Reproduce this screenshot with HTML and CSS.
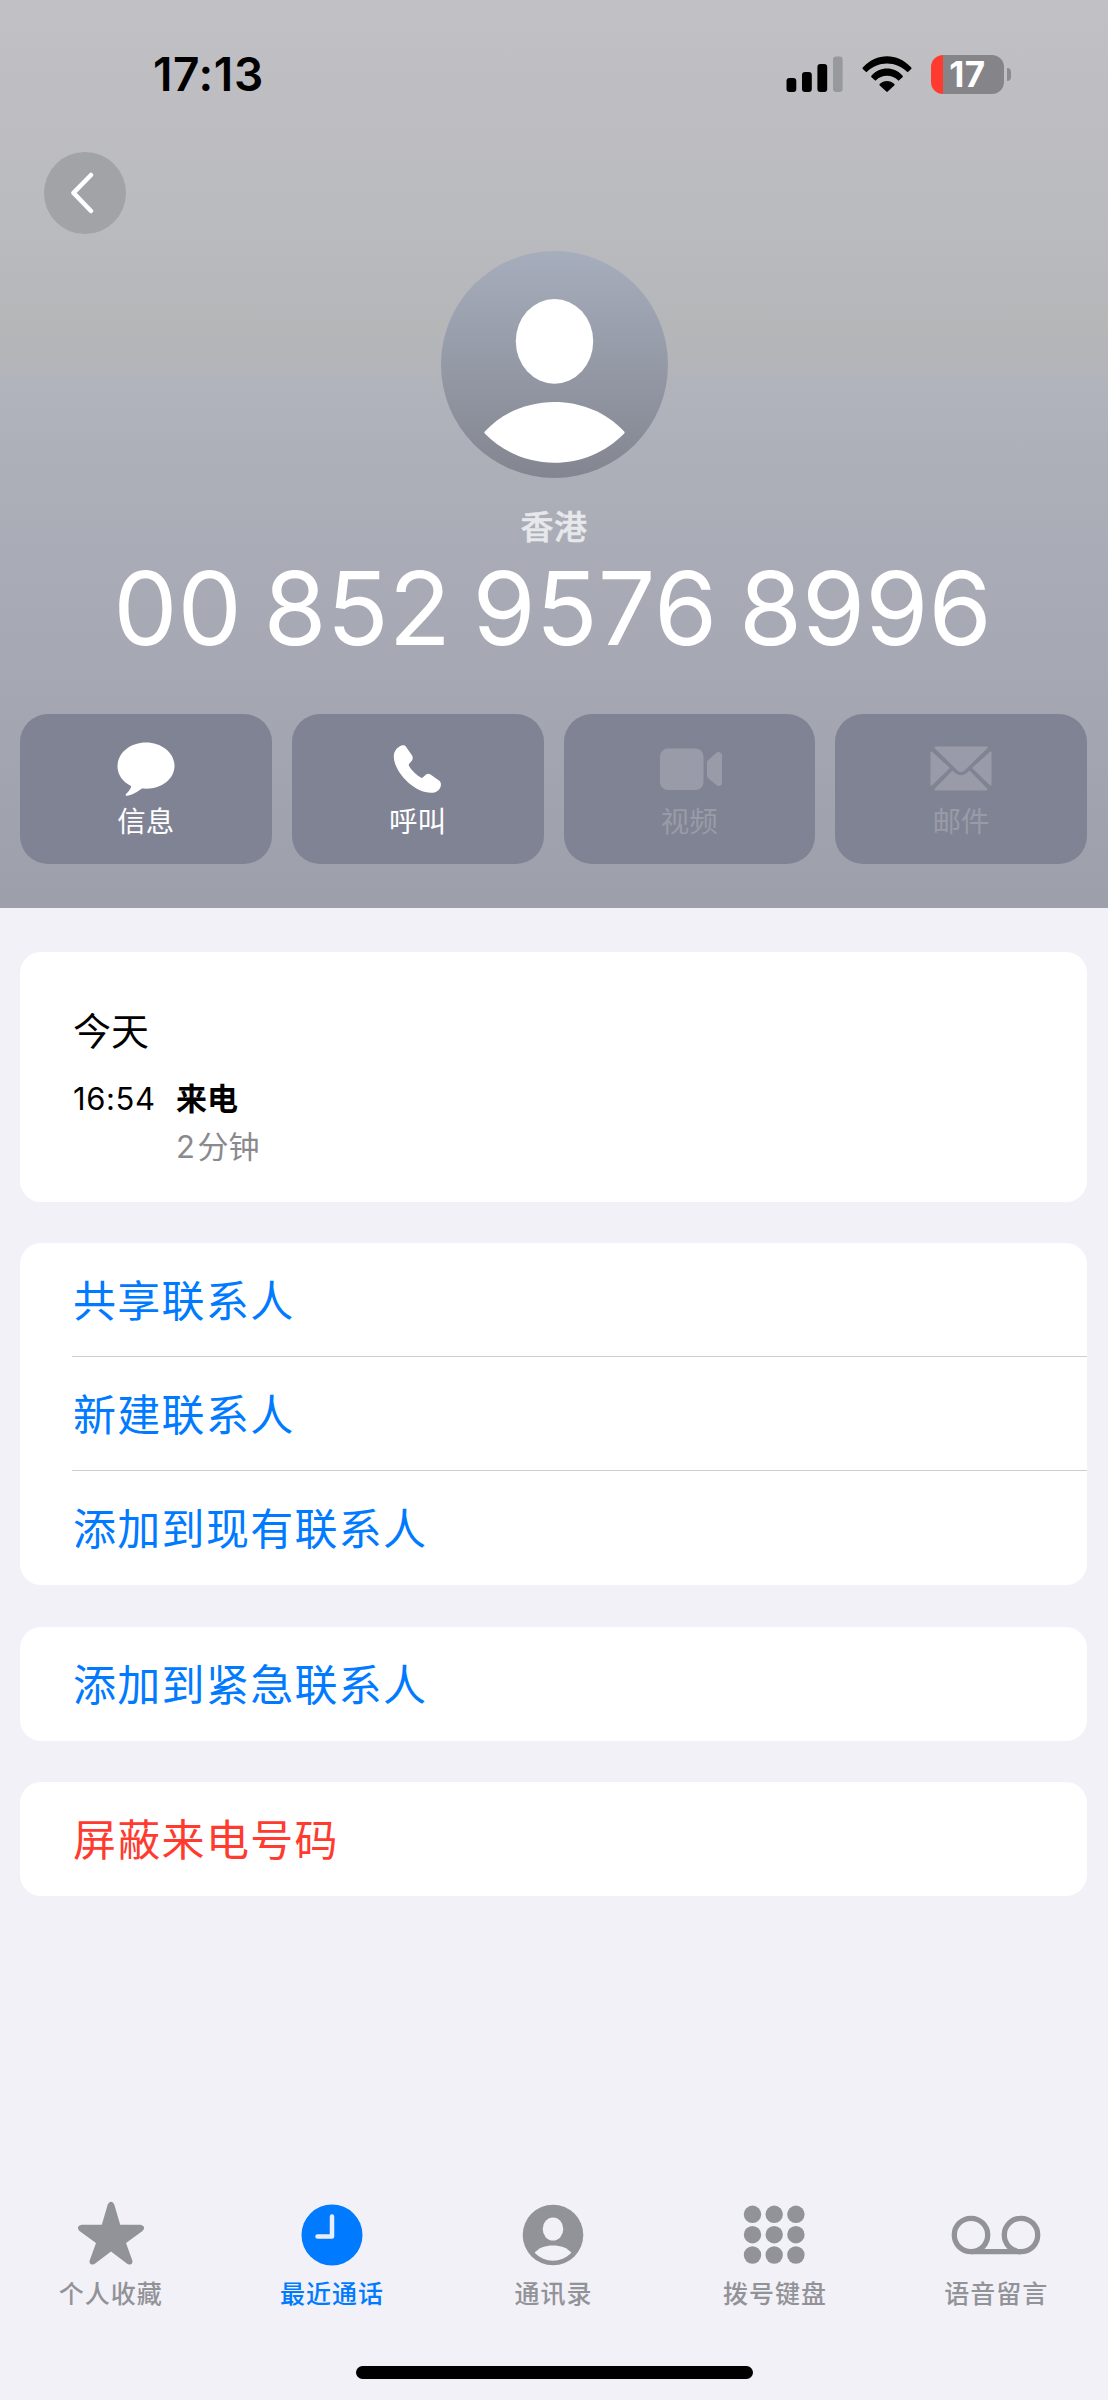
FILE: index.html
```html
<!DOCTYPE html>
<html lang="zh-CN">
<head>
<meta charset="utf-8">
<title>通话详情</title>
<link rel="stylesheet" href="styles.css">
</head>
<body>
<div class="screen">
  <header class="hero">
    <div class="status-bar">
      <span class="clock">17:13</span>
      <div class="status-icons">
        <svg class="signal" width="57" height="36" viewBox="0 0 57 36">
          <rect x="0.5" y="22" width="9.8" height="14" rx="3"/>
          <rect x="16" y="16" width="9.8" height="20" rx="3"/>
          <rect x="31.4" y="8" width="9.8" height="28" rx="3"/>
          <rect class="weak" x="47" y="0.5" width="9.6" height="35.500" rx="3"/>
        </svg>
        <svg class="wifi" width="50" height="36" viewBox="0 0 50 36">
          <path d="M1 11.3C14.500-3.400 35.500-3.400 49 11.300Q50 12.300 49 13.300L45.600 16.300C34 4.700 16 4.700 4.400 16.300L1 13.300Q0 12.300 1 11.300Z"/>
          <path d="M9.400 19.700C18 10 32 10 40.600 19.700Q41.300 20.500 40.500 21.300L36.600 24.800C30 18.200 20 18.200 13.400 24.800L9.500 21.300Q8.700 20.500 9.400 19.700Z"/>
          <path d="M17.700 28.100C21.800 23.800 28.200 23.800 32.300 28.100Q32.900 28.800 32.200 29.500L25.700 35.600Q25 36.200 24.300 35.600L17.800 29.500Q17.100 28.800 17.700 28.100Z"/>
        </svg>
        <div class="battery"><div class="battery-body">17</div><div class="battery-tip"></div></div>
      </div>
    </div>
    <button class="back" aria-label="返回">
      <svg width="24" height="42" viewBox="0 0 24 42"><path d="M21 3L3.500 20.900L21 39"/></svg>
    </button>
    <svg class="avatar" width="227" height="227" viewBox="0 0 227 227">
      <defs><linearGradient id="avatar-fill" x1="0" y1="0" x2="0" y2="1"><stop offset="0" stop-color="#a6adbc"/><stop offset="1" stop-color="#838690"/></linearGradient></defs>
      <circle cx="113.500" cy="113.500" r="113.500" fill="url(#avatar-fill)"/>
      <ellipse cx="113.500" cy="90.300" rx="38.700" ry="42.400" fill="#fff"/>
      <path d="M43.800 180.500C80 141 147 141 183.200 180.500Q184 181.500 183.200 182.500C145 221.500 82 221.500 43.800 182.500Q43 181.500 43.800 180.500Z" fill="#fff"/>
    </svg>
    <p class="region">香港</p>
    <h1 class="number">00 852 9576 8996</h1>
    <div class="actions">
      <button class="action">
        <svg width="58" height="54" viewBox="0 0 58 54"><path d="M29 0.500C13 0.500 0.500 11 0.500 24.500C0.500 33 6 40 14 44C14.500 46 11 50 9 52C8 53.500 9 54 10.500 53.800C15 53.300 21 49.500 25 46.600C26.500 46.700 27.500 46.700 29 46.700C45 46.700 57.500 37 57.500 23.800C57.500 11 45 0.500 29 0.500Z"/></svg>
        <span>信息</span>
      </button>
      <button class="action">
        <svg width="58" height="54" viewBox="1.500 0 58 54"><path d="M6.300 14.300C6.300 9.500 9.500 5 14 3.500C15.700 3 17.500 3.300 18.500 4.800L24.600 13.500C25.500 15 25.500 17 24.500 18.500L21.500 22Q21 23 21.700 24.200C24.500 28.700 29.500 33.500 33.800 35.800Q34.500 36.200 35.500 35.300L38.500 32.500C40 31.400 41.500 31.300 43 32.500L51.500 38.500C53.500 40 53.800 42.500 53 45C51.700 48.800 48 50.800 44 50.800C26 51 6 29 6.300 14.300Z"/></svg>
        <span>呼叫</span>
      </button>
      <button class="action disabled">
        <svg width="64" height="54" viewBox="-2 0 64 54" overflow="visible"><rect x="1" y="6.500" width="43.500" height="41.500" rx="8"/><path d="M48 20.500Q48 19 49.200 18L57.200 11Q59.500 9.300 61.500 10.800Q63 11.500 63 13.500V41Q63 43 61.500 43.500Q59.500 45 57.200 43L49.200 36.300Q48 35.400 48 34Z"/></svg>
        <span>视频</span>
      </button>
      <button class="action disabled">
        <svg width="62" height="54" viewBox="0 0 62 54"><path d="M4 5.500Q5 4.500 6.500 4.500H55.500Q57 4.500 58 5.500L34.500 28.500Q31 31.500 27.500 28.500ZM0.500 10Q1 9 2 9.800L20 26L2 43.200Q1 44.200 0.500 43ZM61.500 10Q61 9 60 9.800L42 26L60 43.200Q61 44.200 61.500 43ZM4 47.500L22.500 28.500L25.500 31.200Q31 35.500 36.500 31.200L39.500 28.500L58 47.500Q57 48.500 55.500 48.500H6.500Q5 48.500 4 47.500Z"/></svg>
        <span>邮件</span>
      </button>
    </div>
  </header>

  <main class="content">
    <section class="card history">
      <h2>今天</h2>
      <div class="call"><time>16:54</time><div class="call-info"><strong>来电</strong><span>2<i></i>分钟</span></div></div>
    </section>
    <section class="card">
      <a class="row">共享联系人</a>
      <a class="row">新建联系人</a>
      <a class="row">添加到现有联系人</a>
    </section>
    <section class="card"><a class="row">添加到紧急联系人</a></section>
    <section class="card"><a class="row danger">屏蔽来电号码</a></section>
  </main>

  <nav class="tabs">
    <a class="tab">
      <svg width="66" height="64" viewBox="0 0 66 64"><path d="M29.800 3.200Q33-1.500 36.200 3.200L42.200 23.700H62.500Q68.500 25.200 64.500 30L48 42L54.500 60Q54.500 65 49.500 63L33 50.500L16.500 63Q11.500 65 11.500 60L18 42L1.500 30Q-2.500 25.200 3.500 23.700H23.800Z"/></svg>
      <span>个人收藏</span>
    </a>
    <a class="tab active">
      <svg width="62" height="64" viewBox="0 0 62 64" overflow="visible"><circle cx="31" cy="34" r="30.500"/><path class="hands" d="M31 15.500V35.500H16.500"/></svg>
      <span>最近通话</span>
    </a>
    <a class="tab">
      <svg width="62" height="64" viewBox="0 0 62 64" overflow="visible"><circle cx="31" cy="34" r="30.300"/><ellipse class="cut" cx="31" cy="28" rx="10.300" ry="11.500"/><path class="cut" d="M12.600 51.800C20 42 42 42 49.400 51.800C39 62.400 23 62.400 12.600 51.800Z"/></svg>
      <span>通讯录</span>
    </a>
    <a class="tab">
      <svg width="62" height="64" viewBox="0.800 0 62 64" overflow="visible"><g><circle cx="9.300" cy="13.300" r="8.700"/><circle cx="31" cy="13.300" r="8.700"/><circle cx="52.700" cy="13.300" r="8.700"/><circle cx="9.300" cy="33.700" r="8.700"/><circle cx="31" cy="33.700" r="8.700"/><circle cx="52.700" cy="33.700" r="8.700"/><circle cx="9.300" cy="54" r="8.700"/><circle cx="31" cy="54" r="8.700"/><circle cx="52.700" cy="54" r="8.700"/></g></svg>
      <span>拨号键盘</span>
    </a>
    <a class="tab">
      <svg class="voicemail" width="90" height="64" viewBox="0 0 90 64"><circle cx="20" cy="34" r="16.700"/><circle cx="70" cy="34" r="16.700"/><path d="M20 50.700H70"/></svg>
      <span>语音留言</span>
    </a>
  </nav>
  <div class="home-indicator"></div>
</div>
</body>
</html>
```
FILE: styles.css
```css
* { box-sizing: border-box; margin: 0; padding: 0; }

body {
  background: #f2f1f7;
  font-family: Inter, "Noto Sans CJK SC", sans-serif;
  color: #000;
}

button { border: 0; font: inherit; color: inherit; }

.screen {
  width: 1108px;
  height: 2400px;
  display: flex;
  flex-direction: column;
  overflow: hidden;
}

.hero {
  height: 908px;
  flex: none;
  display: flex;
  flex-direction: column;
  align-items: center;
  background: linear-gradient(#c1c0c4 0, #babbbf 220px, #b5b6b8 330px, #b0b3bb 400px, #acaeb8 480px, #a9abb6 560px, #a3a5b1 740px, #9d9fab 908px);
}

.status-bar {
  align-self: stretch;
  height: 152px;
  padding: 0 97px 0 153px;
  display: flex;
  justify-content: space-between;
}

.clock {
  margin-top: 49px;
  font-size: 46px;
  line-height: 51px;
  font-weight: 600;
  letter-spacing: 0.600px;
}

.status-icons { display: flex; align-items: flex-start; padding-top: 55px; }
.signal { margin: 1px 19px 0 0; }
.signal .weak { fill: #98999e; }
.wifi { margin: 1px 19px 0 0; }

.battery { display: flex; align-items: center; gap: 3px; }
.battery-body {
  width: 73px;
  height: 38.500px;
  border-radius: 12px;
  background: linear-gradient(90deg, #ff3b30 12px, #858589 12px);
  color: #fff;
  font-size: 35px;
  font-weight: 700;
  line-height: 38px;
  letter-spacing: 0.500px;
  text-align: center;
}
.battery-tip { width: 4px; height: 13px; border-radius: 0 4px 4px 0; background: #8c8c90; }

.back {
  align-self: flex-start;
  width: 82px;
  height: 82px;
  margin-left: 44px;
  border-radius: 50%;
  background: #a2a3a7;
  display: flex;
  align-items: center;
  justify-content: center;
  padding: 0 6px 1px 0;
}
.back path { fill: none; stroke: #fff; stroke-width: 4.500; stroke-linecap: round; stroke-linejoin: round; }

.avatar { flex: none; margin-top: 17px; }

.region {
  margin-top: 27px;
  font-size: 33px;
  line-height: 44px;
  font-weight: 500;
  letter-spacing: 0.500px;
  color: #e7e8eb;
  -webkit-text-stroke: 0.500px #e7e8eb;
}

.number {
  margin-top: 4px;
  margin-bottom: 1px;
  padding-right: 3px;
  font-size: 102px;
  line-height: 110px;
  font-weight: 400;
  word-spacing: -7px;
  white-space: nowrap;
  color: #fff;
}

.actions {
  align-self: stretch;
  display: grid;
  grid-template-columns: repeat(4, 1fr);
  gap: 20px;
  padding: 0 21px 0 20px;
  margin-top: 50px;
}

.action {
  height: 150px;
  border-radius: 28px;
  padding-top: 28px;
  display: flex;
  flex-direction: column;
  align-items: center;
  background: #808394;
  color: #fff;
  fill: #fff;
  font-size: 28.500px;
  line-height: 40px;
}
.action svg { margin-bottom: 6px; }
.action.disabled { color: #999ba8; fill: #999ba8; }

.content {
  flex: 1;
  padding: 44px 21px 0 20px;
  display: flex;
  flex-direction: column;
  gap: 41.500px;
}

.card { border-radius: 21px; background: #fff; overflow: hidden; }

.history { height: 249.500px; padding: 56px 52px 0 53px; }
.history h2 { font-size: 38px; font-weight: 400; line-height: 46px; }
.call { display: flex; margin-top: 21px; font-size: 31px; line-height: 48px; }
.call time { width: 103px; letter-spacing: 0.600px; }
.call-info { display: flex; flex-direction: column; }
.call-info strong { font-weight: 700; }
.call-info span { color: #8a8a8e; }
.call-info i { display: inline-block; width: 2.500px; }

.row {
  display: block;
  height: 114px;
  margin-left: 52px;
  padding: 1px 0 0 1px;
  font-size: 43px;
  line-height: 114px;
  letter-spacing: 1.300px;
  color: #007aff;
}
.row:not(:last-child) { border-bottom: 1px solid #cececf; }
.row.danger { color: #ff3b30; }

.tabs {
  height: 166px;
  flex: none;
  display: grid;
  grid-template-columns: repeat(5, 1fr);
  padding: 1px 1px 0 0;
}
.tab {
  display: flex;
  flex-direction: column;
  align-items: center;
  fill: #929398;
  color: #929398;
  font-size: 25px;
  font-weight: 500;
  line-height: 36px;
  letter-spacing: 1px;
}
.tab svg { margin-bottom: 11px; }
.tab.active { fill: #007aff; color: #007aff; }
.hands { fill: none; stroke: #e8effb; stroke-width: 4.500; stroke-linecap: round; stroke-linejoin: round; }
.cut { fill: #f2f1f7; }
.voicemail { fill: none; stroke: #929398; stroke-width: 5.300; }

.home-indicator {
  flex: none;
  align-self: center;
  width: 397px;
  height: 13px;
  margin-bottom: 21px;
  border-radius: 7px;
  background: #000;
}
```
